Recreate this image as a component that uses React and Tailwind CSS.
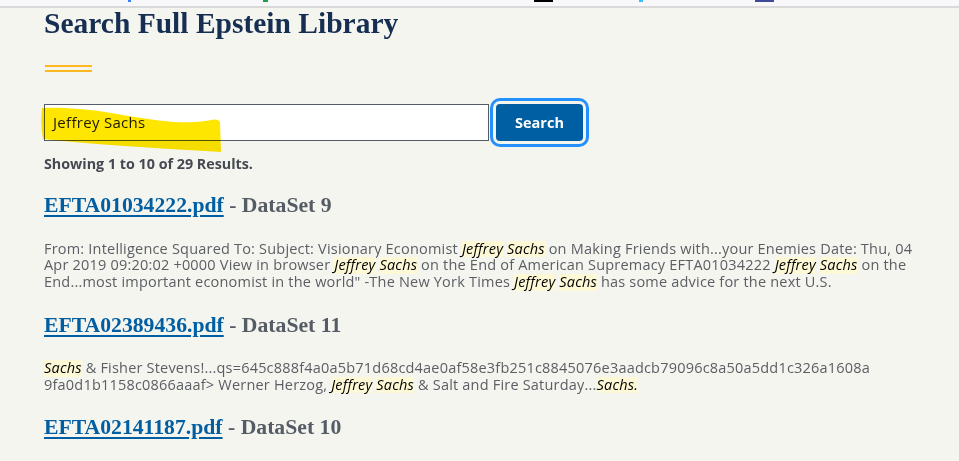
import React from "react";

const serif = { fontFamily: '"Liberation Serif", "Times New Roman", serif' };
const sans = { fontFamily: '"Open Sans", "Noto Sans", Arial, sans-serif' };

function Hit({ children }) {
  return <span className="inline-block leading-[16.67px] bg-[#fdf9d6] text-black italic">{children}</span>;
}

function Result({ file, dataset, lines }) {
  return (
    <div className="mt-[20px]">
      <h2 className="text-[21.7px] leading-[28px] font-bold" style={serif}>
        <a href="#" className="text-[#005ea2] underline decoration-[1.5px] underline-offset-[3px]">
          {file}
        </a>
        <span className="text-[#565c65]"> - {dataset}</span>
      </h2>
      <div
        className="mt-[21.5px] text-[14.5px] tracking-[0.2px] leading-[16.67px] text-[#5b5e63]"
        style={sans}
      >
        {lines.map((line, i) => (
          <div key={i} className="whitespace-nowrap">
            {line}
          </div>
        ))}
      </div>
    </div>
  );
}

export default function App() {
  const results = [
    {
      file: "EFTA01034222.pdf",
      dataset: "DataSet 9",
      lines: [
        <>
          From: Intelligence Squared To: Subject: Visionary Economist <Hit>Jeffrey</Hit> <Hit>Sachs</Hit> on
          Making Friends with...your Enemies Date: Thu, 04
        </>,
        <>
          Apr 2019 09:20:02 +0000 View in browser <Hit>Jeffrey</Hit> <Hit>Sachs</Hit> on the End of American
          Supremacy EFTA01034222 <Hit>Jeffrey</Hit> <Hit>Sachs</Hit> on the
        </>,
        <>
          End...most important economist in the world" -The New York Times <Hit>Jeffrey</Hit>{" "}
          <Hit>Sachs</Hit> has some advice for the next U.S.
        </>,
      ],
    },
    {
      file: "EFTA02389436.pdf",
      dataset: "DataSet 11",
      lines: [
        <>
          <Hit>Sachs</Hit> &amp; Fisher
          Stevens!...qs=645c888f4a0a5b71d68cd4ae0af58e3fb251c8845076e3aadcb79096c8a50a5dd1c326a1608a
        </>,
        <>
          9fa0d1b1158c0866aaaf&gt; Werner Herzog, <Hit>Jeffrey</Hit> <Hit>Sachs</Hit> &amp; Salt and Fire
          Saturday...<Hit>Sachs.</Hit>
        </>,
      ],
    },
    { file: "EFTA02141187.pdf", dataset: "DataSet 10", lines: [] },
  ];

  return (
    <div className="w-[959px] h-[461px] overflow-hidden bg-[#f5f5f0] relative">
      {/* clipped browser toolbar along the top edge */}
      <div className="h-[8px] bg-[#f8f8fa] border-b-2 border-[#d9d9d9] flex items-start">
        <div className="ml-[128px] w-[3px] h-[2px] bg-[#3b82f6]" />
        <div className="ml-[132px] w-[5px] h-[2px] bg-[#16a34a]" />
        <div className="ml-[266px] w-[19px] h-[2px] bg-black" />
        <div className="ml-[86px] w-[4px] h-[2px] bg-[#38bdf8]" />
        <div className="ml-[112px] w-[19px] h-[2px] bg-[#3f4b9a]" />
      </div>

      <div className="pl-[44px]">
        <h1 className="text-[29.5px] leading-[30px] font-bold text-[#162e51]" style={serif}>
          Search Full Epstein Library
        </h1>

        <div className="mt-[27px] ml-[1px] w-[47px] flex flex-col gap-[3px]">
          <div className="h-[2px] bg-[#fdb91f]" />
          <div className="h-[2px] bg-[#fdb91f]" />
        </div>

        <div className="mt-[32px] flex items-center gap-[7px]" style={sans}>
          <div className="w-[445px] h-[37px] bg-white border border-[#565c65] flex items-center pl-[8px] text-[15px] tracking-[0.3px] text-[#1b1b1b]">
            Jeffrey Sachs
          </div>
          <button className="w-[87px] h-[37px] rounded-[4px] bg-[#005ea2] text-white text-[14.5px] font-bold outline-[3px] outline-solid outline-[#2491ff] outline-offset-[3px]">
            Search
          </button>
        </div>

        <p className="mt-[13px] text-[14.3px] leading-[20px] font-bold text-[#454a52]" style={sans}>
          Showing 1 to 10 of 29 Results.
        </p>

        <div className="-mt-[3px]">
          {results.map((r) => (
            <Result key={r.file} {...r} />
          ))}
        </div>
      </div>

      {/* highlighter stroke drawn over the search field */}
      <svg
        className="absolute left-0 top-0 pointer-events-none mix-blend-multiply"
        width="240"
        height="170"
        viewBox="0 0 240 170"
      >
        <path
          d="M42 108 C60 107 85 109 105 112 C130 116 150 120 175 122 C195 123 205 121 212 120 C216 119 219 120 220 122 L221 152 C190 150 150 148 110 145 C85 143 60 141 43 139 C41 128 41 118 42 108 Z"
          fill="#ffe600"
        />
      </svg>
    </div>
  );
}
